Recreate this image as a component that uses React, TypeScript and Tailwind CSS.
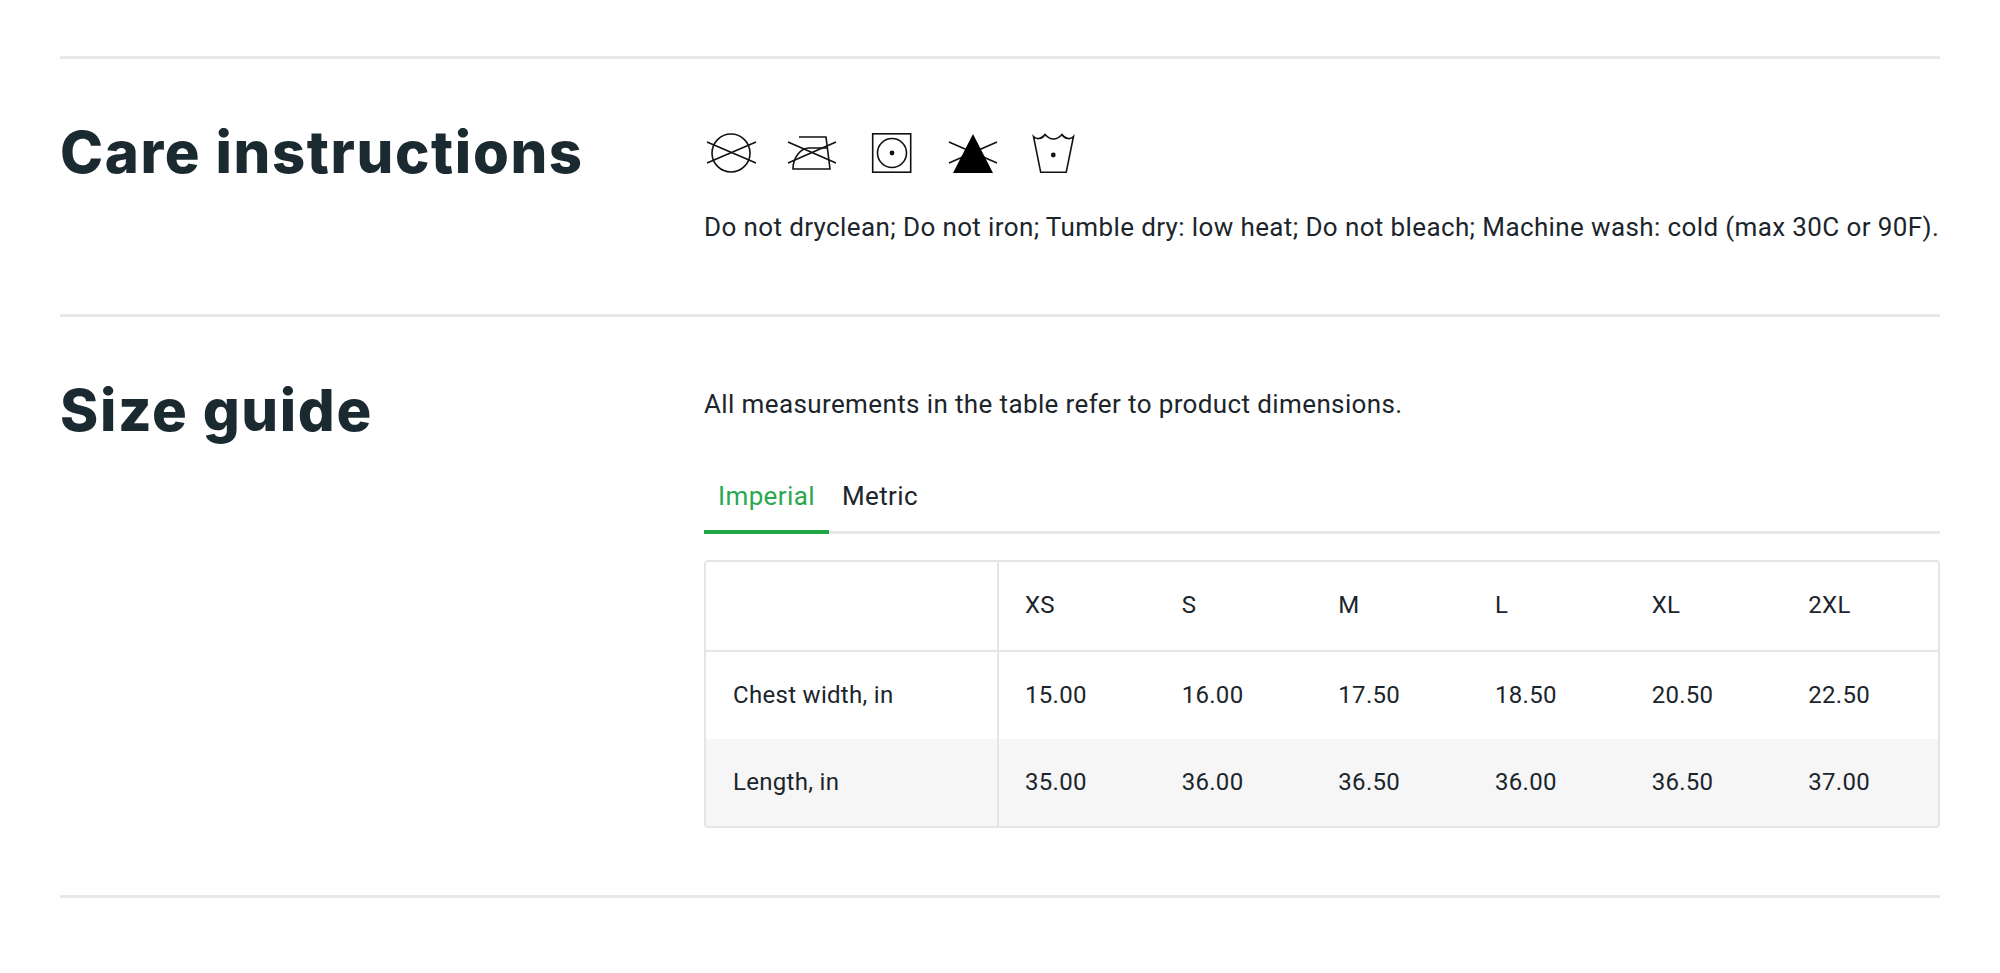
const rows = [
  ["Chest width, in", "15.00", "16.00", "17.50", "18.50", "20.50", "22.50"],
  ["Length, in", "35.00", "36.00", "36.50", "36.00", "36.50", "37.00"],
];
const sizes = ["XS", "S", "M", "L", "XL", "2XL"];

function Icons() {
  return (
    <div className="flex h-[42px] items-start">
      <svg width="52" height="42" viewBox="0 0 52 42" fill="none" stroke="#111" strokeWidth="1.6" className="ml-[1px]">
        <circle cx="26" cy="20" r="19" />
        <path d="M2 9 51 30M2 30 51 9" />
      </svg>
      <svg width="52" height="42" viewBox="0 0 52 42" fill="none" stroke="#111" strokeWidth="1.6" className="ml-[29px]">
        <path d="M13 4h27l4 32H7c0-12 8-21 16-21h19" />
        <path d="M2 9 50 30M2 30 50 9" />
      </svg>
      <svg width="42" height="42" viewBox="0 0 42 42" fill="none" stroke="#111" strokeWidth="1.6" className="ml-[33px]">
        <rect x="1.7" y="0.8" width="38" height="38.4" />
        <circle cx="21" cy="20" r="14.5" />
        <circle cx="21" cy="20" r="2.4" fill="#111" stroke="none" />
      </svg>
      <svg width="52" height="42" viewBox="0 0 52 42" fill="none" stroke="#111" strokeWidth="1.6" className="ml-[34px]">
        <path d="M2 9 50 30M2 30 50 9" />
        <path d="M26 1 46 40H6Z" fill="#000" stroke="none" />
      </svg>
      <svg width="46" height="42" viewBox="0 0 46 42" fill="none" stroke="#111" strokeWidth="1.6" className="ml-[32px]">
        <path d="M2.5 3.5Q5 6 8 5.5 12 5 14 1.5 18 6 22.5 6 27 6 31 1.5 33 5 37 5.5 40 6 42.5 3.5L35.2 39.3H9.7Z" />
        <circle cx="22.3" cy="22" r="2.4" fill="#111" stroke="none" />
      </svg>
    </div>
  );
}

export default function App() {
  return (
    <div className="min-h-[973px] bg-white px-[60px] pt-[56px] font-['Roboto',sans-serif] text-[26px] tracking-[0.38px] text-[#1b252b]">
      <section className="flex h-[258px] border-t-[3px] border-[#e6e9e9] pt-[61px]">
        <h2 className="w-[644px] shrink-0 font-['Inter',sans-serif] text-[58px] leading-[64px] font-extrabold tracking-[1.6px] text-[#1b2a31]">
          Care instructions
        </h2>
        <div className="flex-1 pt-[13px]">
          <Icons />
          <p className="mt-[34px] leading-[36px] whitespace-nowrap">
            Do not dryclean; Do not iron; Tumble dry: low heat; Do not bleach; Machine wash: cold (max 30C or 90F).
          </p>
        </div>
      </section>
      <section className="flex h-[581px] border-t-[3px] border-[#e6e9e9] pt-[61px]">
        <h2 className="w-[644px] shrink-0 font-['Inter',sans-serif] text-[58px] leading-[64px] font-extrabold tracking-[1.6px] text-[#1b2a31]">
          Size guide
        </h2>
        <div className="flex-1">
          <p className="mt-[8px] leading-[36px]">All measurements in the table refer to product dimensions.</p>
          <div className="mt-[47px] flex border-b-[3px] border-[#e6e9e9]">
            <div className="-mb-[3px] h-[65px] border-b-[4px] border-[#23a648] px-[14px] pt-[9px] leading-[36px] text-[#2aa84f]">Imperial</div>
            <div className="px-[13px] pt-[9px] leading-[36px]">Metric</div>
          </div>
          <div className="mt-[26px] overflow-hidden rounded-[4px] border-2 border-[#e3e6e6] text-[24px] leading-[32px] tracking-[0.3px]">
            <table className="w-full table-fixed border-collapse">
              <tbody>
                <tr className="h-[89px] border-b-2 border-[#e3e6e6]">
                  <td className="w-[292px] border-r-2 border-[#e3e6e6]"></td>
                  {sizes.map((s, j) => (
                    <td key={s} className={j === 0 ? "pb-[2px] pl-[26px]" : "pb-[2px] pl-[27px]"}>{s}</td>
                  ))}
                </tr>
                {rows.map((r, i) => (
                  <tr key={r[0]} className={i === 1 ? "h-[87px] bg-[#f6f6f7]" : "h-[88px]"}>
                    {r.map((c, j) => (
                      <td
                        key={j}
                        className={
                          j === 0
                            ? "border-r-2 border-[#e3e6e6] pb-[2px] pl-[27px]"
                            : j === 1
                              ? "pb-[2px] pl-[26px]"
                              : "pb-[2px] pl-[27px]"
                        }
                      >
                        {c}
                      </td>
                    ))}
                  </tr>
                ))}
              </tbody>
            </table>
          </div>
        </div>
      </section>
      <div className="border-t-[3px] border-[#e6e9e9]"></div>
    </div>
  );
}
